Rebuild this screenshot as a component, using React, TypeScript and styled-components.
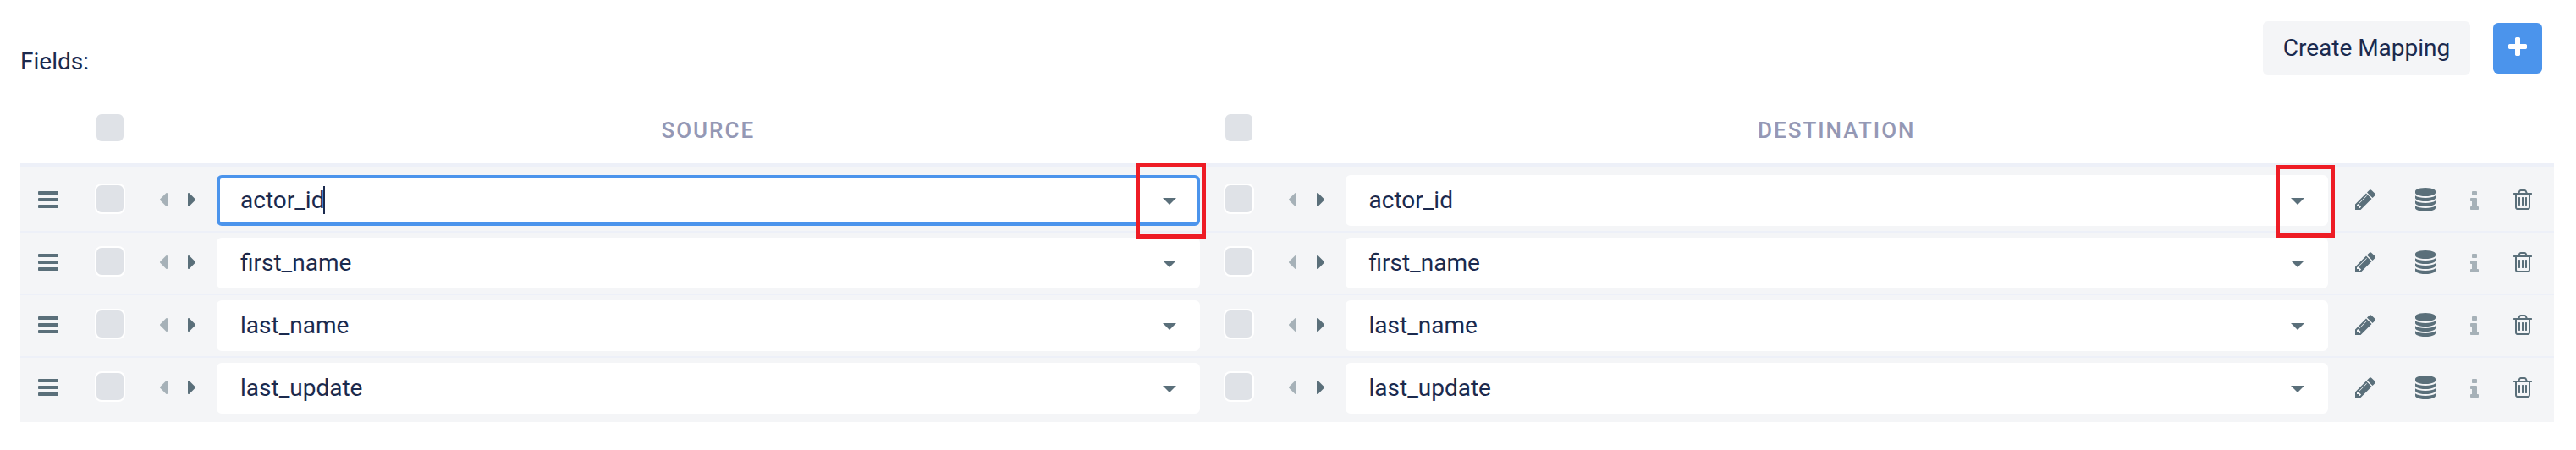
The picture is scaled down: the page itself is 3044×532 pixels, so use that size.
import React from "react";
import styled, { createGlobalStyle, css } from "styled-components";

const ink = "#1b2a4e";
const slate = "#5a6f7a";
const line = "#edf0f8";
const blue = "#4b94ec";
const panel = "#f4f5f7";

const GlobalStyle = createGlobalStyle`
  *, *::before, *::after { box-sizing: border-box; }
  body { margin: 0; background: #fff; color: ${ink}; font-family: Roboto, "Liberation Sans", sans-serif; font-size: 28px; }
`;

const paths = {
  bars: "M1664 1344v128q0 26-19 45t-45 19h-1408q-26 0-45-19t-19-45v-128q0-26 19-45t45-19h1408q26 0 45 19t19 45zm0-512v128q0 26-19 45t-45 19h-1408q-26 0-45-19t-19-45v-128q0-26 19-45t45-19h1408q26 0 45 19t19 45zm0-512v128q0 26-19 45t-45 19h-1408q-26 0-45-19t-19-45v-128q0-26 19-45t45-19h1408q26 0 45 19t19 45z",
  left: "M1216 448v896q0 26-19 45t-45 19-45-19l-448-448q-19-19-19-45t19-45l448-448q19-19 45-19t45 19 19 45z",
  right: "M1152 896q0 26-19 45l-448 448q-19 19-45 19t-45-19-19-45v-896q0-26 19-45t45-19 45 19l448 448q19 19 19 45z",
  plus: "M1600 736v192q0 40-28 68t-68 28h-416v416q0 40-28 68t-68 28h-192q-40 0-68-28t-28-68v-416h-416q-40 0-68-28t-28-68v-192q0-40 28-68t68-28h416v-416q0-40 28-68t68-28h192q40 0 68 28t28 68v416h416q40 0 68 28t28 68z",
  pencil: "M491 1536l91-91-235-235-91 91v107h128v128h107zm523-928q0-22-22-22-10 0-17 7l-542 542q-7 7-7 17 0 22 22 22 10 0 17-7l542-542q7-7 7-17zm-54-192l416 416-832 832h-416v-416zm683 96q0 53-37 90l-166 166-416-416 166-165q36-38 90-38 53 0 91 38l235 234q37 39 37 91z",
  database: "M896 768q237 0 443-43t325-127v170q0 69-103 128t-280 93.5-385 34.5-385-34.5-280-93.5-103-128v-170q119 84 325 127t443 43zm0 768q237 0 443-43t325-127v170q0 69-103 128t-280 93.5-385 34.5-385-34.5-280-93.5-103-128v-170q119 84 325 127t443 43zm0-384q237 0 443-43t325-127v170q0 69-103 128t-280 93.5-385 34.5-385-34.5-280-93.5-103-128v-170q119 84 325 127t443 43zm0-1152q208 0 385 34.5t280 93.5 103 128v128q0 69-103 128t-280 93.5-385 34.5-385-34.5-280-93.5-103-128v-128q0-69 103-128t280-93.5 385-34.5z",
  info: "M1216 1472v128q0 26-19 45t-45 19h-512q-26 0-45-19t-19-45v-128q0-26 19-45t45-19h64v-384h-64q-26 0-45-19t-19-45v-128q0-26 19-45t45-19h384q26 0 45 19t19 45v576h64q26 0 45 19t19 45zm-128-1152v192q0 26-19 45t-45 19h-256q-26 0-45-19t-19-45v-192q0-26 19-45t45-19h256q26 0 45 19t19 45z",
  trash: "M704 736v576q0 14-9 23t-23 9h-64q-14 0-23-9t-9-23v-576q0-14 9-23t23-9h64q14 0 23 9t9 23zm256 0v576q0 14-9 23t-23 9h-64q-14 0-23-9t-9-23v-576q0-14 9-23t23-9h64q14 0 23 9t9 23zm256 0v576q0 14-9 23t-23 9h-64q-14 0-23-9t-9-23v-576q0-14 9-23t23-9h64q14 0 23 9t9 23zm128 724v-948h-896v948q0 22 7 40.5t14.5 27 10.5 8.5h832q3 0 10.5-8.5t14.5-27 7-40.5zm-672-1076h448l-48-117q-7-9-17-11h-317q-10 2-17 11zm928 32v64q0 14-9 23t-23 9h-96v948q0 83-47 143.5t-113 60.5h-832q-66 0-113-58.5t-47-141.5v-952h-96q-14 0-23-9t-9-23v-64q0-14 9-23t23-9h309l70-167q15-37 54-63t79-26h320q40 0 79 26t54 63l70 167h309q14 0 23 9t9 23z",
};

const Glyph = styled.svg<{ $faded?: boolean }>`
  display: block;
  flex: none;
  width: 28px;
  height: 28px;
  fill: currentColor;
  opacity: ${(p) => (p.$faded ? 0.5 : 1)};
`;

const Icon = ({ name, faded }: { name: keyof typeof paths; faded?: boolean }) => (
  <Glyph viewBox="0 0 1792 1792" $faded={faded} aria-hidden="true">
    <path d={paths[name]} />
  </Glyph>
);

const Page = styled.main`
  width: 3044px;
  height: 532px;
  padding: 25px 26px 0 24px;
  background: #fff;
`;

const Toolbar = styled.header`
  display: flex;
  justify-content: space-between;
  height: 94px;
  padding-right: 14px;
`;

const Title = styled.div`
  padding-top: 31px;
  line-height: 33px;
`;

const Actions = styled.div`
  display: flex;
  align-items: center;
  gap: 27px;
  height: 64px;
`;

const CreateButton = styled.button`
  width: 245px;
  height: 64px;
  padding: 0 0 1px;
  border: 0;
  border-radius: 6px;
  background: ${panel};
  color: ${ink};
  font: 400 28px/33px Roboto, "Liberation Sans", sans-serif;
`;

const AddButton = styled.button`
  display: flex;
  justify-content: center;
  align-items: flex-start;
  width: 58px;
  height: 60px;
  padding: 15px 0 0;
  border: 0;
  border-radius: 6px;
  background: ${blue};
  color: #fff;
`;

const columns = css`
  display: grid;
  grid-template-columns: 88px 1305.5px 28px 1305.5px 1fr;
`;

const HeadRow = styled.div`
  ${columns}
  height: 78px;
  padding-top: 14px;
  border-bottom: 4px solid ${line};
`;

const Side = styled.div<{ $column: number }>`
  display: grid;
  grid-template-columns: 36px 108px 1161.5px;
  grid-column: ${(p) => p.$column};
`;

const HeadLabel = styled.div`
  grid-column: 3;
  padding-top: 6px;
  color: #9498b5;
  font-size: 26px;
  font-weight: 500;
  line-height: 30px;
  letter-spacing: 2px;
  text-align: center;
`;

const Body = styled.section`
  padding: 4px 0 2px;
  background: ${panel};
`;

const Row = styled.div`
  ${columns}
  height: 74px;
  padding-top: 6px;
  border-bottom: 2px solid ${line};
  color: ${slate};
  &:last-child { border-bottom-color: transparent; }
`;

const Handle = styled.div`
  padding: 15px 0 0 19px;
`;

const Check = styled.span<{ $head?: boolean }>`
  width: 36px;
  height: 36px;
  margin-top: ${(p) => (p.$head ? 0 : 10)}px;
  border: 2px solid #fff;
  border-radius: 8px;
  background: #dfe2e7;
`;

const Arrows = styled.div`
  display: flex;
  gap: 6px;
  padding: 15px 0 0 31px;
`;

const Select = styled.div<{ $focused?: boolean }>`
  position: relative;
  display: flex;
  align-items: center;
  justify-content: space-between;
  height: 60px;
  padding: 0 24px;
  border: 4px solid ${(p) => (p.$focused ? blue : "#fff")};
  border-radius: 6px;
  background: #fff;
`;

const Value = styled.span`
  display: flex;
  align-items: center;
  padding-bottom: 1px;
  color: ${ink};
  line-height: 33px;
`;

const Cursor = styled.i`
  width: 2px;
  height: 33px;
  margin-left: -1px;
  background: ${ink};
`;

const Caret = styled.i`
  width: 0;
  height: 0;
  margin-top: 2px;
  border: 8px solid transparent;
  border-top-color: ${slate};
  border-bottom-width: 0;
`;

const Highlight = styled.span<{ $top: number; $right: number; $width: number; $height: number }>`
  position: absolute;
  z-index: 1;
  top: ${(p) => p.$top}px;
  right: ${(p) => p.$right}px;
  width: ${(p) => p.$width}px;
  height: ${(p) => p.$height}px;
  border: 5px solid #ee1c25;
`;

const Tools = styled.div`
  display: grid;
  grid-template-columns: 71px 58px 57px 28px;
  grid-column: 5;
  padding: 15px 0 0 30px;
`;

const fields = ["actor_id", "first_name", "last_name", "last_update"];

const FieldSide = ({ column, value, focused, mark }: {
  column: number; value: string; focused?: boolean; mark?: React.ReactNode;
}) => (
  <Side $column={column}>
    <Check />
    <Arrows>
      <Icon name="left" faded />
      <Icon name="right" />
    </Arrows>
    <Select $focused={focused}>
      <Value>{value}{focused && <Cursor />}</Value>
      <Caret />
      {mark}
    </Select>
  </Side>
);

export default function App() {
  return (
    <>
      <GlobalStyle />
      <Page>
        <Toolbar>
          <Title>Fields:</Title>
          <Actions>
            <CreateButton>Create Mapping</CreateButton>
            <AddButton aria-label="Add"><Icon name="plus" /></AddButton>
          </Actions>
        </Toolbar>
        <HeadRow>
          <Side $column={2}><Check $head /><HeadLabel>SOURCE</HeadLabel></Side>
          <Side $column={4}><Check $head /><HeadLabel>DESTINATION</HeadLabel></Side>
        </HeadRow>
        <Body>
          {fields.map((field, i) => (
            <Row key={field}>
              <Handle><Icon name="bars" /></Handle>
              <FieldSide
                column={2}
                value={field}
                focused={i === 0}
                mark={i === 0 && <Highlight $top={-18} $right={-11.5} $width={83} $height={89} />}
              />
              <FieldSide
                column={4}
                value={field}
                mark={i === 0 && <Highlight $top={-16} $right={-12} $width={70} $height={86} />}
              />
              <Tools>
                <Icon name="pencil" />
                <Icon name="database" />
                <Icon name="info" faded />
                <Icon name="trash" />
              </Tools>
            </Row>
          ))}
        </Body>
      </Page>
    </>
  );
}
